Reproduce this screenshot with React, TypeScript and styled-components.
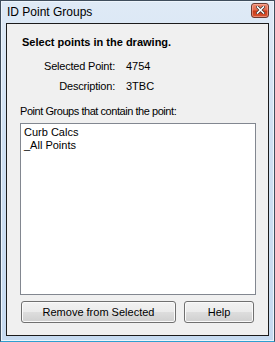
import React from 'react';
import styled, { createGlobalStyle } from 'styled-components';

const GlobalStyle = createGlobalStyle`
  html, body {
    margin: 0;
    padding: 0;
    background: #ffffff;
  }
  body {
    font-family: "Liberation Sans", Arial, sans-serif;
    font-size: 11px;
    color: #000;
  }
`;

const Frame = styled.div`
  width: 275px;
  height: 342px;
  box-sizing: border-box;
  border: 1px solid #3f4d5c;
  border-bottom-color: #2f9fd0;
  background: linear-gradient(180deg, #dfeaf6 0%, #cfe0f2 40%, #c6daf0 100%);
  box-shadow: inset 0 0 0 1px #eef5fc;
  padding: 0 5px 5px 5px;
  display: flex;
  flex-direction: column;
`;

const TitleBar = styled.div`
  height: 22px;
  display: flex;
  align-items: center;
  justify-content: space-between;
  padding-left: 1px;
`;

const Title = styled.span`
  font-size: 12px;
  color: #000;
`;

const CloseButton = styled.div`
  width: 18px;
  height: 15px;
  box-sizing: border-box;
  margin-top: -4px;
  border: 1px solid #6e3a30;
  border-radius: 3px;
  background: linear-gradient(180deg, #ee8a70 0%, #e26a4e 45%, #c93b18 55%, #d85432 100%);
  box-shadow: inset 0 0 0 1px rgba(255, 190, 175, 0.5);
  display: flex;
  align-items: center;
  justify-content: center;
`;

const Client = styled.div`
  flex: 1;
  border: 1px solid #1b1b1b;
  background: #f0f0f0;
  padding: 11px 12px 12px 13px;
  display: flex;
  flex-direction: column;
  min-height: 0;
`;

const Heading = styled.div`
  font-weight: bold;
  font-size: 11px;
  line-height: 15px;
  margin-left: 2px;
`;

const InfoGrid = styled.div`
  display: grid;
  grid-template-columns: 95px auto;
  column-gap: 11px;
  row-gap: 6px;
  margin-top: 9px;
`;

const Label = styled.span`
  text-align: right;
  line-height: 14px;
  letter-spacing: -0.2px;
`;

const Value = styled.span`
  line-height: 14px;
`;

const ListCaption = styled.div`
  line-height: 14px;
  margin-top: 11px;
  letter-spacing: -0.45px;
`;

const ListBox = styled.div`
  flex: 1;
  margin-top: 5px;
  background: #ffffff;
  border: 1px solid #828790;
  padding: 2px 3px;
  display: flex;
  flex-direction: column;
`;

const ListItem = styled.div`
  line-height: 13px;
`;

const ButtonRow = styled.div`
  display: flex;
  gap: 8px;
  margin-top: 6px;
  margin-left: 1px;
`;

const Button = styled.div<{ $width: number }>`
  width: ${(p) => p.$width}px;
  height: 22px;
  box-sizing: border-box;
  border: 1px solid #707070;
  border-radius: 3px;
  background: linear-gradient(180deg, #f2f2f2 0%, #ebebeb 48%, #dddddd 52%, #cfcfcf 100%);
  box-shadow: inset 0 0 0 1px #fafafa;
  display: flex;
  align-items: center;
  justify-content: center;
  font-size: 11px;
`;

const App: React.FC = () => (
  <>
    <GlobalStyle />
    <Frame>
      <TitleBar>
        <Title>ID Point Groups</Title>
        <CloseButton>
          <svg width="9" height="8" viewBox="0 0 9 8">
            <path d="M1.5 1 L7.5 7 M7.5 1 L1.5 7" stroke="#3a2a28" strokeWidth="3" strokeLinecap="square" />
            <path d="M1.5 1 L7.5 7 M7.5 1 L1.5 7" stroke="#ffffff" strokeWidth="1.6" strokeLinecap="square" />
          </svg>
        </CloseButton>
      </TitleBar>
      <Client>
        <Heading>Select points in the drawing.</Heading>
        <InfoGrid>
          <Label>Selected Point:</Label>
          <Value>4754</Value>
          <Label>Description:</Label>
          <Value>3TBC</Value>
        </InfoGrid>
        <ListCaption>Point Groups that contain the point:</ListCaption>
        <ListBox>
          <ListItem>Curb Calcs</ListItem>
          <ListItem>_All Points</ListItem>
        </ListBox>
        <ButtonRow>
          <Button $width={155}>Remove from Selected</Button>
          <Button $width={70}>Help</Button>
        </ButtonRow>
      </Client>
    </Frame>
  </>
);

export default App;
